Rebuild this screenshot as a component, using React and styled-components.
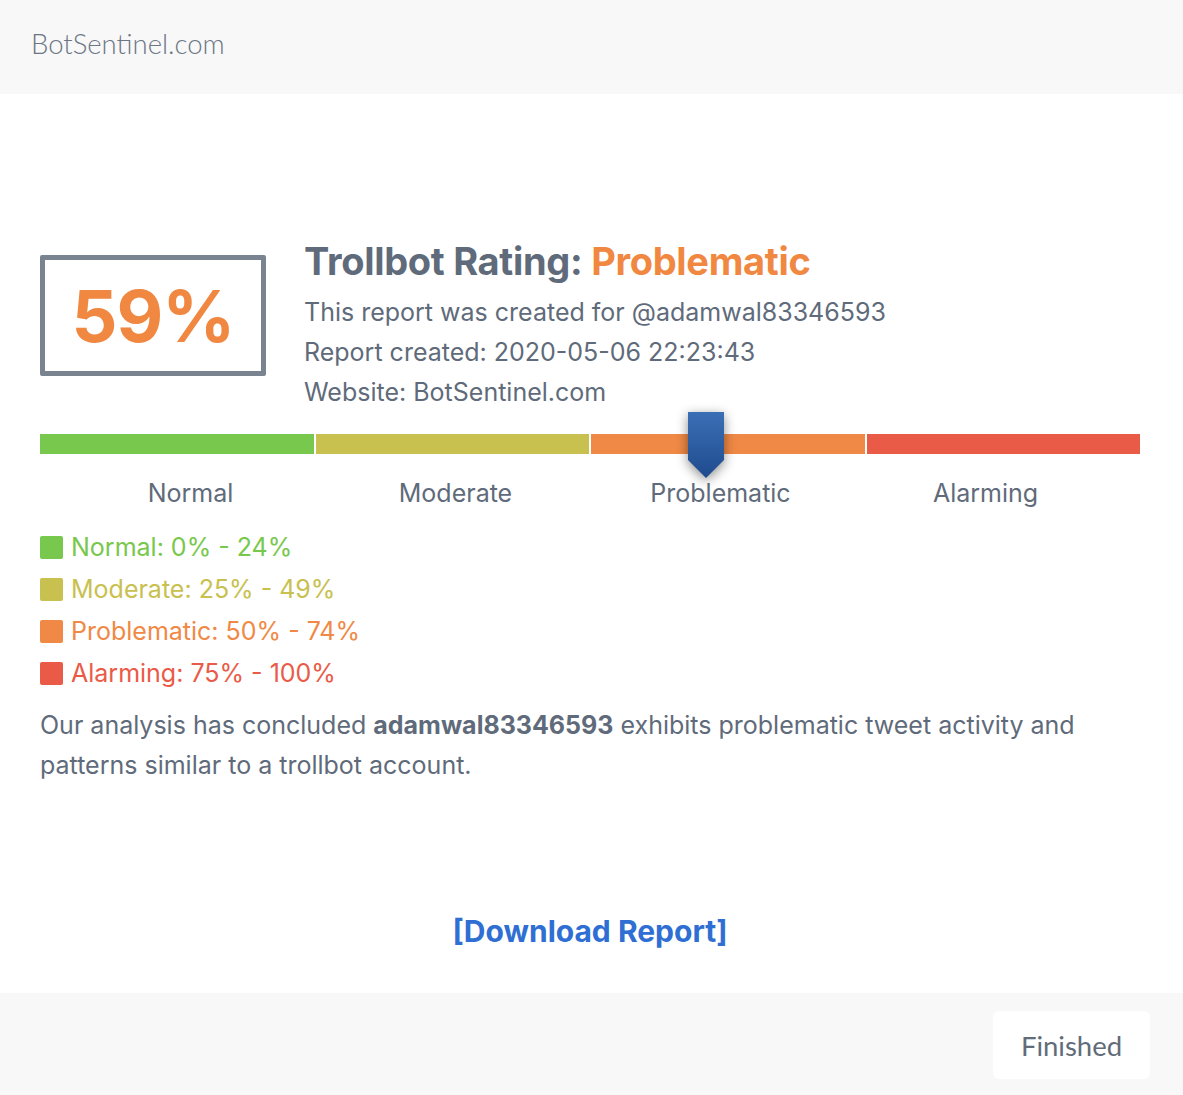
import React from "react";
import styled, { createGlobalStyle } from "styled-components";

const Global = createGlobalStyle`
  html, body { margin: 0; padding: 0; background: #fff; }
  body { font-family: Inter, "Noto Sans", sans-serif; }
`;

const Page = styled.div`
  width: 1183px;
  height: 1095px;
  display: flex;
  flex-direction: column;
  background: #fff;
`;

const Header = styled.header`
  height: 94px;
  flex: none;
  background: #f8f8f9;
  display: flex;
  align-items: center;
  padding: 0 32px 7px 31px;
  box-sizing: border-box;
  font-family: Lato, sans-serif;
  font-weight: 300;
  font-size: 27.5px;
  color: #6c7684;
`;

const Body = styled.main`
  flex: 1;
  padding: 143px 43px 0 40px;
  box-sizing: border-box;
  color: #5f6b7a;
`;

const Top = styled.div`
  display: flex;
  gap: 38px;
  align-items: flex-start;
`;

const ScoreBox = styled.div`
  margin-top: 18px;
  width: 226px;
  height: 121px;
  box-sizing: border-box;
  border: 5px solid #7a8491;
  border-radius: 2px;
  display: flex;
  align-items: center;
  justify-content: center;
  font-size: 72px;
  font-weight: 700;
  color: #f08841;
  letter-spacing: -1px;
`;

const Info = styled.div`
  display: flex;
  flex-direction: column;
`;

const Title = styled.h1`
  margin: 0 0 7px 0;
  font-size: 38px;
  line-height: 48px;
  font-weight: 700;
  color: #5f6b7a;
  letter-spacing: -0.3px;
`;

const Accent = styled.span`
  color: #f08841;
`;

const Line = styled.div`
  font-size: 25px;
  line-height: 40px;
`;

const ScaleWrap = styled.div`
  position: relative;
  margin-top: 22px;
`;

const Bar = styled.div`
  display: flex;
  gap: 2px;
  height: 20px;
`;

const Seg = styled.div`
  flex: 1;
  background: ${(p) => p.$c};
`;

const Marker = styled.svg`
  position: absolute;
  top: -22px;
  filter: drop-shadow(0 3px 6px rgba(0, 0, 0, 0.45));
`;

const Labels = styled.div`
  display: grid;
  grid-template-columns: repeat(4, 1fr);
  padding: 0 22px 0 18px;
  margin-top: 24px;
`;

const Label = styled.div`
  text-align: center;
  font-size: 25px;
  line-height: 30px;
`;

const Legend = styled.div`
  margin-top: 24px;
  display: flex;
  flex-direction: column;
  gap: 12px;
`;

const LegendRow = styled.div`
  display: flex;
  align-items: center;
  gap: 8px;
  font-size: 25px;
  line-height: 30px;
  color: ${(p) => p.$c};
`;

const Swatch = styled.span`
  width: 23px;
  height: 23px;
  border-radius: 2px;
  background: ${(p) => p.$c};
  flex: none;
`;

const Para = styled.p`
  margin: 17px 0 0 0;
  font-size: 25px;
  line-height: 40px;
`;

const DownloadRow = styled.div`
  margin-top: 128px;
  display: flex;
  justify-content: center;
`;

const Download = styled.a`
  font-size: 30px;
  font-weight: 700;
  color: #2f6fd3;
  text-decoration: none;
`;

const Footer = styled.footer`
  height: 102px;
  flex: none;
  background: #f8f8f9;
  display: flex;
  align-items: center;
  justify-content: flex-end;
  padding: 0 33px;
  box-sizing: border-box;
`;

const Button = styled.button`
  width: 157px;
  height: 68px;
  border: none;
  border-radius: 6px;
  background: #fff;
  font-family: Lato, sans-serif;
  font-size: 27.5px;
  color: #626c79;
  margin-top: 2px;
`;

const segs = [
  { name: "Normal", c: "#77c84c", range: "0% - 24%" },
  { name: "Moderate", c: "#c8c04f", range: "25% - 49%" },
  { name: "Problematic", c: "#f08945", range: "50% - 74%" },
  { name: "Alarming", c: "#ea5b47", range: "75% - 100%" },
];

export default function App() {
  const score = 59;
  return (
    <>
      <Global />
      <Page>
        <Header>BotSentinel.com</Header>
        <Body>
          <Top>
            <ScoreBox>{score}%</ScoreBox>
            <Info>
              <Title>
                Trollbot Rating: <Accent>Problematic</Accent>
              </Title>
              <Line>This report was created for @adamwal83346593</Line>
              <Line>Report created: 2020-05-06 22:23:43</Line>
              <Line>Website: BotSentinel.com</Line>
            </Info>
          </Top>
          <ScaleWrap>
            <Bar>
              {segs.map((s) => (
                <Seg key={s.name} $c={s.c} />
              ))}
            </Bar>
            <Marker
              width="36"
              height="68"
              viewBox="0 0 36 68"
              style={{ left: `${(score / 100) * 1100 - 1}px` }}
            >
              <defs>
                <linearGradient id="mk" x1="0" y1="0" x2="0" y2="1">
                  <stop offset="0" stopColor="#3b6fb5" />
                  <stop offset="1" stopColor="#1f4b8e" />
                </linearGradient>
              </defs>
              <path d="M0 0 H36 V48 L18 66 L0 48 Z" fill="url(#mk)" />
            </Marker>
            <Labels>
              {segs.map((s) => (
                <Label key={s.name}>{s.name}</Label>
              ))}
            </Labels>
          </ScaleWrap>
          <Legend>
            {segs.map((s) => (
              <LegendRow key={s.name} $c={s.c}>
                <Swatch $c={s.c} />
                {s.name}: {s.range}
              </LegendRow>
            ))}
          </Legend>
          <Para>
            Our analysis has concluded <b>adamwal83346593</b> exhibits problematic tweet
            activity and patterns similar to a trollbot account.
          </Para>
          <DownloadRow>
            <Download href="#">[Download Report]</Download>
          </DownloadRow>
        </Body>
        <Footer>
          <Button>Finished</Button>
        </Footer>
      </Page>
    </>
  );
}
